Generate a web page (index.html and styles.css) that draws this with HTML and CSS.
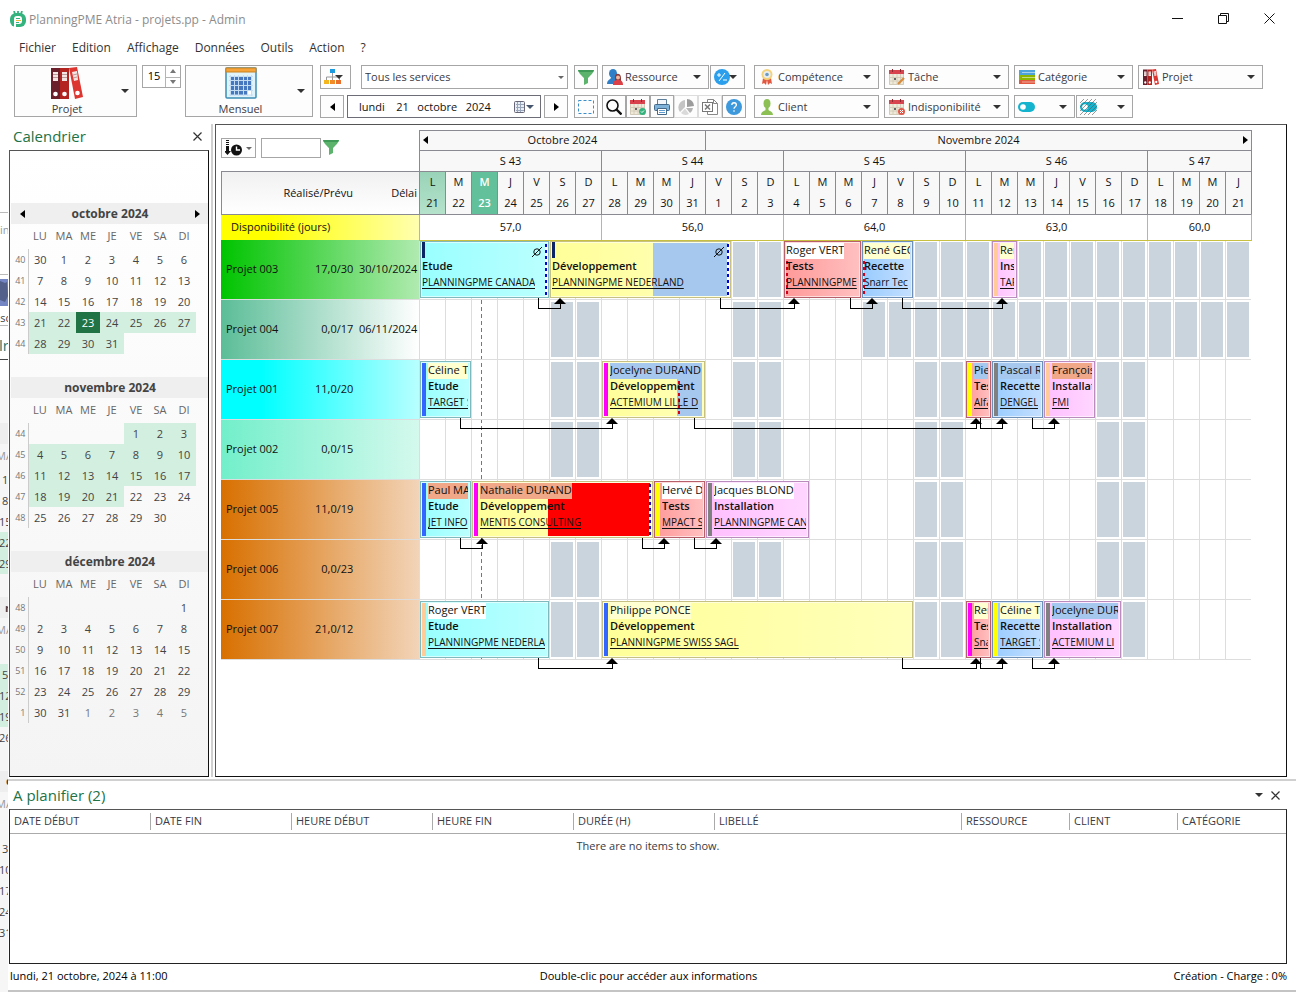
FILE: index.html
```html
<!DOCTYPE html>
<html lang="fr">
<head>
<meta charset="utf-8">
<meta name="viewport" content="width=device-width, initial-scale=1">
<title>PlanningPME Atria - projets.pp - Admin</title>
<link rel="stylesheet" href="styles.css">
</head>
<body>
<svg class="defs" width="0" height="0" aria-hidden="true">
  <symbol id="i-binders" viewBox="0 0 32 32">
    <path fill="#6b1f2a" d="M0 1h9v31H0z"/><path fill="#b32420" d="M9 1h9v31H9z"/><path fill="#dd3530" d="M18 1l8-1 6 30-8 2z"/>
    <path fill="#f4e4e2" d="M2 5h5v9H2zM11 5h5v9h-5zM21 5l5-1 1 9-4 1z"/>
    <path stroke="#b99" stroke-width="1" d="M2 7.500h5M2 10.500h5M11 7.500h5M11 10.500h5M22 8l4-1M22 11l4-1"/>
    <circle cx="4.500" cy="27" r="2.300" fill="#fff"/><circle cx="13.500" cy="27" r="2.300" fill="#fff"/><circle cx="26.500" cy="26" r="2.300" fill="#fff"/>
  </symbol>
  <symbol id="i-month" viewBox="0 0 32 32">
    <rect x="1" y="1" width="30" height="30" rx="1" fill="#dff3fa" stroke="#3c8db5" stroke-width="1.500"/>
    <rect x="1" y="1" width="30" height="4" fill="#f6a43a" stroke="#c98320"/>
    <path fill="#4678c0" d="M5 9h22v19H5z"/><path fill="#fff" d="M22 23h5v5h-5z"/>
    <path stroke="#c5ddf2" stroke-width="1" d="M5.500 8v21M9.500 8v21M13.500 8v21M18.500 8v21M22.500 8v21M26.500 8v21M4 9.500h24M4 13.500h24M4 18.500h24M4 23.500h24M4 28h24"/>
  </symbol>
  <symbol id="i-funnel" viewBox="0 0 16 16">
    <path fill="#5cb46c" d="M0 1h16c0 2-3 5-6 8v5l-4 2V9C3 6 0 3 0 1z"/><path fill="#3f9a58" d="M0 1h16l-1 2H1z"/>
  </symbol>
  <symbol id="i-people" viewBox="0 0 16 16">
    <ellipse cx="6" cy="4.500" rx="4" ry="4.500" fill="#2f7fc8"/><path fill="#2f7fc8" d="M0 15c0-5 4-4 4-7h5l2 7z"/>
    <path fill="#8a3a3a" d="M8 9c-1-5 6-6 6 0v4H8z"/><circle cx="11" cy="8.500" r="2" fill="#f0b9a0"/><path fill="#dc3f45" d="M6 16c0-4 2-5 5-5s5 1 5 5z"/>
  </symbol>
  <symbol id="i-task" viewBox="0 0 16 16">
    <path fill="#efe9da" stroke="#c9c0aa" stroke-width=".8" d="M.5 3h14v12.500H.5z"/><path fill="#d9434e" d="M0 1h15v4H0z"/>
    <path stroke="#8c2730" d="M3.500 0v3M11.500 0v3"/><path stroke="#cfc7b3" stroke-width=".8" d="M1 8.500h13M1 12h13M4 5v10M8 5v10M11.500 5v10"/><path fill="#666" d="M5 9h2v2H5z"/>
  </symbol>
</svg>

<svg class="behind" viewBox="0 0 8 992" aria-hidden="true">
  <rect y="380" width="8" height="612" fill="#f6f6f6"/>
  <path class="rule" d="M0 212.500h8M0 274.500h8M0 325.500h8"/><path class="rule-dark" d="M0 359.500h8"/>
  <rect y="279" width="8" height="27" fill="#7487c4"/><path d="M0 281l5 2 2-1 1 14-3 6-5-2z" fill="#53608a"/>
  <path class="band" d="M0 423h8v21H0zM0 597h8v21H0zM0 771h8v21H0z"/>
  <path class="range" d="M0 532h8v42H0zM0 664h8v63H0z"/>
  <text x="0" y="234" class="dim">in</text><text x="-5" y="322">ssc</text><text x="-1" y="351" class="teal">lr</text>
  <text x="-4" y="460" class="dim">MA</text><text x="2" y="484">1</text><text x="2" y="505">8</text><text x="-1" y="526">15</text><text x="-1" y="547">22</text><text x="-1" y="568">29</text>
  <text x="5" y="612" class="b">n</text><text x="-4" y="634" class="dim">MA</text><text x="2" y="679">5</text><text x="-1" y="700">12</text><text x="-1" y="721">19</text><text x="-1" y="742">26</text>
  <text x="6" y="785" class="b">d</text><text x="-4" y="808" class="dim">MA</text><text x="2" y="853">3</text><text x="-1" y="874">10</text><text x="-1" y="895">17</text><text x="-1" y="916">24</text><text x="-1" y="937">31</text>
</svg>

<div class="app">
  <header class="titlebar">
    <svg width="16" height="16" viewBox="0 0 16 16" aria-hidden="true"><rect x="0" y="2" width="16" height="14" rx="6" fill="#35b37e"/><path stroke="#35b37e" stroke-width="1.800" d="M4 0l1 3M8 0v3M12 0l-1 3"/><rect x="4" y="5" width="8" height="8" rx="3" fill="#fff"/><path fill="#fff" d="M4 9h2v7H4z"/><path stroke="#35b37e" d="M6 7.500h4M6 11.500h3"/><path stroke="#f0b840" d="M6 9.500h5"/></svg>
    <h1>PlanningPME Atria - projets.pp - Admin</h1>
    <div class="winbtns">
      <button type="button" aria-label="Réduire"><svg width="11" height="11"><path d="M0 5.500h11"/></svg></button>
      <button type="button" aria-label="Restaurer"><svg width="11" height="11"><path d="M.5 2.500h8v8h-8zM2.500 2.500v-2h8v8h-2"/></svg></button>
      <button type="button" aria-label="Fermer"><svg width="11" height="11"><path d="M.5.5l10 10M10.500.5l-10 10"/></svg></button>
    </div>
  </header>

  <nav class="menubar">
    <button type="button">Fichier</button><button type="button">Edition</button><button type="button">Affichage</button><button type="button">Données</button><button type="button">Outils</button><button type="button">Action</button><button type="button">?</button>
  </nav>

  <div class="toolbar">
    <button type="button" class="btn big projet"><span class="stack"><svg width="32" height="32"><use href="#i-binders"/></svg>Projet</span><i class="caret"></i></button>
    <div class="spinner">
      <input type="text" inputmode="numeric" value="15" aria-label="Échelle">
      <span class="steps"><button type="button" aria-label="Augmenter"><i class="tri-up"></i></button><button type="button" aria-label="Diminuer"><i class="tri-down"></i></button></span>
    </div>
    <button type="button" class="btn big mensuel"><span class="stack"><svg width="32" height="32"><use href="#i-month"/></svg>Mensuel</span><i class="caret"></i></button>

    <div class="rows filters">
      <div class="row top">
        <button type="button" class="btn org" aria-label="Organisation"><svg width="18" height="16" viewBox="0 0 18 16"><path stroke="#999" fill="none" d="M8.500 4v4M2.500 11V8h13v3M8.500 8v3"/><path fill="#1c9ae0" d="M6 0h5v4H6z"/><path fill="#f3b61f" d="M0 11h5v4H0z"/><path fill="#f28c28" d="M6 11h5v4H6z"/><path fill="#e8702a" d="M12 11h5v4h-5z"/></svg><i class="caret"></i></button>
        <span class="combo"><select aria-label="Services"><option>Tous les services</option></select><i class="caret mini"></i></span>
        <button type="button" class="btn sq" aria-label="Filtrer"><svg width="16" height="16"><use href="#i-funnel"/></svg></button>
        <button type="button" class="btn drop ressource"><svg width="16" height="16"><use href="#i-people"/></svg><span>Ressource</span><i class="caret"></i></button>
        <button type="button" class="btn calc" aria-label="Opérations"><svg width="16" height="16" viewBox="0 0 16 16"><circle cx="8" cy="8" r="8" fill="#2b9fec"/><path stroke="#fff" fill="none" d="M3 6h4M5 4v4M5 12l6-8M9 11h4"/></svg><i class="caret"></i></button>
      </div>
      <div class="row bottom">
        <button type="button" class="btn sq" aria-label="Précédent"><i class="tri-left"></i></button>
        <span class="date"><input type="text" value="lundi    21   octobre   2024" aria-label="Date"><button type="button" aria-label="Choisir une date"><svg width="20" height="14" viewBox="0 0 20 14"><rect x=".5" y="1.500" width="10" height="11" rx="1" fill="#e9eef5" stroke="#667"/><path stroke="#99a5b8" d="M2 4.500h8M2 7.500h8M2 10.500h8M3.500 2v10M6.500 2v10"/><path fill="#46566e" d="M12 5h8l-4 4z"/></svg></button></span>
        <button type="button" class="btn sq" aria-label="Suivant"><i class="tri-right"></i></button>
        <button type="button" class="btn sq gapped" aria-label="Sélection"><svg width="16" height="14" viewBox="0 0 16 14"><path fill="none" stroke="#3a8fc8" stroke-dasharray="3 2" d="M.5.5h15v13H.5z"/></svg></button>
        <span class="tools">
          <button type="button" class="btn sq" aria-label="Rechercher"><svg width="16" height="16" viewBox="0 0 16 16"><circle cx="6.500" cy="6.500" r="5.500" fill="none" stroke="#111" stroke-width="1.600"/><path stroke="#111" stroke-width="2.400" d="M10.500 10.500L15.500 15.500"/></svg></button>
          <button type="button" class="btn sq" aria-label="Planifier"><svg width="16" height="16" viewBox="0 0 16 16"><use href="#i-task" width="16" height="16"/><circle cx="12.500" cy="12.500" r="3.500" fill="#35b37e"/><path fill="none" stroke="#fff" d="M11 12.500l1 1 2-2"/></svg></button>
          <button type="button" class="btn sq" aria-label="Imprimer"><svg width="16" height="16" viewBox="0 0 16 16"><path fill="#f2f6fa" stroke="#5d7f9c" d="M3.500.5h9v5h-9z"/><rect x=".5" y="5.500" width="15" height="6" rx="1" fill="#7fb2d9" stroke="#44698a"/><path fill="#fff" stroke="#44698a" d="M3.500 9.500h9v6h-9z"/><path stroke="#5d9bd0" d="M5 11.500h6M5 13.500h6"/></svg></button>
          <button type="button" class="btn sq off" aria-label="Statistiques"><svg width="16" height="16" viewBox="0 0 16 16"><path fill="#c4c4c4" d="M7 8L2 13A7.500 7.500 0 0 1 7 1z"/><path fill="#9c9c9c" d="M9 0a7 7 0 0 1 7 7L9 8z"/><path fill="#b4b4b4" d="M8 9l7 0a7 7 0 0 1-3 5z"/><path fill="#dadada" d="M7 9.500l4 5.500a7 7 0 0 1-8-1z"/></svg></button>
          <button type="button" class="btn sq off" aria-label="Excel"><svg width="16" height="16" viewBox="0 0 16 16"><path fill="#fff" stroke="#888" d="M5.500.5h6l4 4v11h-10zM11.500.5v4h4"/><rect x=".5" y="3.500" width="10" height="9" fill="#fff" stroke="#777"/><path stroke="#777" stroke-width="1.500" d="M3 5.500l5 5M8 5.500l-5 5"/></svg></button>
          <button type="button" class="btn sq" aria-label="Aide"><svg width="16" height="16" viewBox="0 0 16 16"><circle cx="8" cy="8" r="8" fill="#3d98dc"/><path fill="none" stroke="#fff" stroke-width="1.300" d="M5.800 6c0-3 4.600-3 4.600 0C10.400 7.600 8 7.800 8 9.800M8 11.300v1.500"/></svg></button>
        </span>
      </div>
    </div>

    <div class="rows">
      <div class="row top">
        <button type="button" class="btn drop w-l"><svg width="16" height="16" viewBox="0 0 16 16"><path fill="#e2573f" d="M4 9l-1 6 2-1 2 2 1-5 1 5 2-2 2 1-1-6z"/><circle cx="8" cy="5.500" r="5.500" fill="#f3d27a"/><circle cx="8" cy="5.500" r="3.600" fill="#e8eef2"/><circle cx="8" cy="5.500" r="1.800" fill="#6d9cc0"/></svg><span>Compétence</span><i class="caret"></i></button>
        <button type="button" class="btn drop w-l"><svg width="16" height="16" viewBox="0 0 16 16"><use href="#i-task" width="16" height="16"/><path stroke="#d98a3a" stroke-width="2.200" d="M9 15l6-6"/></svg><span>Tâche</span><i class="caret"></i></button>
        <button type="button" class="btn drop w-m"><svg width="16" height="16" viewBox="0 0 16 16"><path fill="#4ea3dc" d="M0 1h16v5H0z"/><path fill="#8db600" d="M0 6h16v5H0z"/><path fill="#e2573f" d="M0 11h16v4H0z"/><path stroke="#fff" stroke-opacity=".5" d="M3 3.500h13M3 8.500h13M3 13h13"/></svg><span>Catégorie</span><i class="caret"></i></button>
        <button type="button" class="btn drop w-l"><svg width="16" height="16"><use href="#i-binders"/></svg><span>Projet</span><i class="caret"></i></button>
      </div>
      <div class="row bottom">
        <button type="button" class="btn drop w-l"><svg width="16" height="16" viewBox="0 0 16 16"><ellipse cx="8" cy="4.500" rx="3.500" ry="4.500" fill="#8cc055"/><path fill="#8cc055" d="M2 16c0-4 4-4 4.500-5V8h3v3c.5 1 4.500 1 4.500 5z"/></svg><span>Client</span><i class="caret"></i></button>
        <button type="button" class="btn drop w-l"><svg width="16" height="16" viewBox="0 0 16 16"><use href="#i-task" width="16" height="16"/><circle cx="12.500" cy="12.500" r="3.500" fill="#e05a4c"/><path stroke="#fff" d="M11 11l3 3M14 11l-3 3"/></svg><span>Indisponibilité</span><i class="caret"></i></button>
        <span class="pair w-m">
          <button type="button" class="btn drop state" aria-label="État"><svg width="17" height="16" viewBox="0 0 17 16"><rect y="3" width="17" height="10" rx="5" fill="#14b4cf"/><circle cx="5" cy="8" r="2.800" fill="#fff"/></svg><i class="caret"></i></button>
          <button type="button" class="btn drop hatch" aria-label="Fond"><svg width="17" height="16" viewBox="0 0 17 16"><rect y="3" width="17" height="10" rx="5" fill="#14b4cf"/><circle cx="5" cy="8" r="2.800" fill="#fff"/><path stroke="#555" stroke-width=".6" d="M0 4l4-4M0 8l8-8M0 12l12-12M0 16L16 0M4 16L17 3M8 16l9-9M12 16l5-5"/></svg><i class="caret"></i></button>
        </span>
      </div>
    </div>
  </div>

  <main class="workspace">
    <aside class="calendar">
      <div class="dock-title"><h2>Calendrier</h2><button type="button" class="x" aria-label="Fermer le calendrier"><svg width="9" height="9"><path d="M.5.5l8 8M8.500.5l-8 8"/></svg></button></div>
      <div class="months" id="months"></div>
    </aside>
    <div class="vsplit"></div>
    <section class="gantt">
      <div class="corner">
        <button type="button" class="btn sort" aria-label="Trier"><svg width="18" height="16" viewBox="0 0 18 16"><path fill="#111" d="M1 0h3v1H1zM1 2h3v1H1zM1 4h3v1H1zM1 6h3v5h2l-3.500 4L-1 11h2z"/><circle cx="11.500" cy="10" r="5.500" fill="#111"/><path fill="none" stroke="#fff" stroke-width="1.400" d="M11.500 6.500V10H15"/></svg><i class="caret mini"></i></button>
        <input type="text" class="quick" aria-label="Filtre rapide">
        <svg width="16" height="16" aria-hidden="true"><use href="#i-funnel"/></svg>
      </div>
      <div class="colhead"><span></span><span>Réalisé/Prévu</span><span>Délai</span></div>
      <div class="scale">
        <div class="cells monthrow" id="monthrow"></div>
        <div class="cells weekrow" id="weekrow"></div>
        <div class="cells dayrow" id="dayrow"></div>
      </div>
      <div class="availhead">Disponibilité (jours)</div>
      <div class="cells avail" id="avail"></div>
      <div class="projects" id="projects"></div>
      <div class="timeline" id="timeline"></div>
    </section>
  </main>

  <div class="hsplit"></div>
  <section class="todo">
    <div class="dock-title"><h2>A planifier (2)</h2><button type="button" class="x" aria-label="Options"><i class="caret"></i></button><button type="button" class="x" aria-label="Fermer la liste"><svg width="9" height="9"><path d="M.5.5l8 8M8.500.5l-8 8"/></svg></button></div>
    <div class="list">
      <table>
        <thead><tr><th class="c-date">DATE DÉBUT</th><th class="c-date">DATE FIN</th><th class="c-date">HEURE DÉBUT</th><th class="c-date">HEURE FIN</th><th class="c-date">DURÉE (H)</th><th>LIBELLÉ</th><th class="c-end">RESSOURCE</th><th class="c-end">CLIENT</th><th class="c-end">CATÉGORIE</th></tr></thead>
        <tbody><tr><td colspan="9">There are no items to show.</td></tr></tbody>
      </table>
    </div>
  </section>
  <footer class="status"><span>lundi, 21 octobre, 2024 à 11:00</span><span>Double-clic pour accéder aux informations</span><span>Création - Charge : 0%</span></footer>
</div>
<script src="app.js"></script>
</body>
</html>
```
FILE: styles.css
```css
* { box-sizing: border-box; }
body {
  margin: 0;
  display: grid;
  grid-template-columns: 8px minmax(0, 1fr);
  min-height: 100vh;
  background: #fff;
  color: #111;
  font: 11px/16px "Open Sans", "Noto Sans", sans-serif;
}
button, input, select { font: inherit; color: inherit; margin: 0; padding: 0; border: 0; background: none; }
h1, h2 { margin: 0; font-weight: 400; }
svg { display: block; flex: none; }
.defs { position: absolute; }

/* window lying behind the left edge */
.behind { width: 8px; height: 992px; overflow: hidden; font-size: 11px; fill: #444; }
.behind .dim { fill: #999; }
.behind .b { font-weight: 700; }
.behind .teal { fill: #217a72; font-size: 15px; }
.behind .rule { stroke: #bbb; }
.behind .rule-dark { stroke: #444; }
.behind .band { fill: #eee; }
.behind .range { fill: #d3efdf; }

.app { display: flex; flex-direction: column; min-height: 100vh; border-bottom: 2px solid #c4c4c4; }

.titlebar { display: flex; align-items: center; height: 37px; padding: 0 4px 0 2px; gap: 3px; color: #8c8c8c; }
.titlebar h1 { font-size: 12px; flex: 1; padding-top: 2px; }
.winbtns { display: flex; }
.winbtns button { width: 46px; height: 30px; display: grid; place-items: center; }
.winbtns path { stroke: #111; fill: none; }

.menubar { display: flex; align-items: center; gap: 16px; height: 21px; padding-left: 11px; font-size: 12px; color: #333; }

.caret { width: 0; height: 0; border: 4px solid transparent; border-top-color: #333; border-bottom: 0; flex: none; }
.caret.mini { border-width: 3px; border-bottom: 0; border-top-color: #666; }
.tri-up { border: 3px solid transparent; border-bottom: 4px solid #777; border-top: 0; }
.tri-down { border: 3px solid transparent; border-top: 4px solid #777; border-bottom: 0; }
.tri-left { border: 4px solid transparent; border-right: 5px solid #000; border-left: 0; }
.tri-right { border: 4px solid transparent; border-left: 5px solid #000; border-right: 0; }

.toolbar { display: flex; height: 66px; padding: 7px 0 6px 6px; color: #3a3a44; }
.btn { display: flex; align-items: center; border: 1px solid #a6a6a6; background: #fdfdfd; }
.big { height: 52px; justify-content: flex-end; padding-right: 7px; }
.stack { display: flex; flex-direction: column; align-items: center; flex: 1; gap: 2px; padding: 2px 2px 0 0; }
.projet { width: 123px; margin-right: 5px; }
.mensuel { width: 128px; margin-right: 7px; }
.spinner { display: flex; width: 39px; height: 23px; margin-right: 4px; border: 1px solid #a6a6a6; }
.spinner input { width: 22px; padding-bottom: 2px; text-align: center; color: #000; }
.steps { flex: 1; display: grid; grid-template-rows: 1fr 1fr; border-left: 1px solid #b4b4b4; }
.steps button { display: grid; place-items: center; }
.steps button + button { border-top: 1px solid #b4b4b4; }

.rows { display: flex; flex-direction: column; gap: 6px; margin-right: 8px; }
.row { display: flex; }
.row.top { height: 24px; }
.row.bottom { height: 23px; }
.sq { width: 24px; justify-content: center; }
.off { border-color: #ddd; }
.tools { display: flex; }
.org { width: 31px; margin-right: 10px; padding-left: 3px; }
.org .caret { margin-left: -7px; }
.calc { width: 35px; padding-left: 3px; margin-left: 1px; }
.calc .caret { margin-left: -1px; }
.combo { display: flex; align-items: center; width: 207px; margin-right: 6px; padding-right: 3px; border: 1px solid #a6a6a6; }
.combo select { appearance: none; flex: 1; height: 100%; padding-left: 3px; }
.drop { padding: 0 7px 0 4px; gap: 3px; }
.drop span { flex: 1; text-align: left; white-space: nowrap; }
.ressource { width: 107px; margin-left: 4px; gap: 2px; }
.date { display: flex; align-items: center; width: 194px; margin: 0 3px; padding-right: 6px; border: 1px solid #6d6d78; color: #111; }
.date input { flex: 1; min-width: 0; padding-left: 11px; white-space: pre; }
.gapped { margin: 0 4px 0 6px; }
.rows:last-child .row { gap: 5px; }
.w-l { width: 125px; }
.w-m { width: 119px; }
.pair { display: flex; gap: 1px; }
.pair .drop { justify-content: space-between; padding-left: 3px; }
.state { width: 61px; }
.hatch { width: 57px; }

.workspace { flex: 1; display: flex; padding: 0 9px 2px 1px; }
.dock-title { display: flex; align-items: center; height: 26px; padding: 0 7px 2px 4px; gap: 8px; }
.dock-title h2 { flex: 1; font-size: 15px; line-height: 20px; color: #217346; }
.x { display: grid; place-items: center; height: 16px; }
.x path { stroke: #333; stroke-width: 1.2; }

.calendar { width: 200px; display: flex; flex-direction: column; }
.months { flex: 1; border: 1px solid #111; border-color: #555 #111 #111 #555; background: linear-gradient(#fff, #f4f4f4); padding: 52px 0 0 1px; }
.month { margin-bottom: 23px; color: #444; }
.month h3 { margin: 0; height: 21px; background: #efefef; font-size: 12px; line-height: 21px; display: flex; align-items: center; padding: 0 8px 0 9px; }
.month h3 span { flex: 1; text-align: center; }
.month h3 button { display: flex; }
.month table { border-collapse: collapse; table-layout: fixed; width: 185px; }
.month th, .month td { padding: 0; height: 21px; text-align: center; font-weight: 400; }
.month thead th { height: 25px; padding-bottom: 2px; color: #666; }
.month .wk { width: 17px; text-align: right; padding-right: 2px; font-size: 9px; color: #777; }
.month tbody .wk { border-right: 1px solid #ccc; }
.month .in { background: #d3efdf; }
.month .today { background: #217346; color: #fff; }
.month .out { color: #777; }

.vsplit { width: 2px; margin: 0 2px; background: #d0d0d0; }
.gantt {
  flex: 1; min-width: 0;
  display: grid;
  grid-template-columns: 198px minmax(0, 1fr);
  grid-template-rows: 41px 43px 26px 420px;
  align-content: start;
  padding: 5px 34px 20px 5px;
  border: 1px solid #555; border-right-color: #111; border-bottom-color: #111;
}
.corner { display: flex; align-items: flex-start; padding-top: 8px; gap: 5px; }
.sort { width: 35px; height: 20px; padding-left: 3px; gap: 3px; }
.quick { width: 60px; height: 20px; border: 1px solid #a6a6a6; }
.corner > svg { margin: 1px 0 0 -3px; }
.colhead, .project { display: grid; grid-template-columns: 1fr 75px 64px; align-items: center; text-align: right; padding: 0 2px 0 5px; white-space: nowrap; }
.colhead { grid-column: 1; grid-row: 2; border: 1px solid #8a8a92; border-right: 0; border-bottom: 0; background: linear-gradient(#f1f1f1, #fff); }
.scale { grid-column: 2; grid-row: 1 / 3; display: grid; grid-template-rows: 20px 21px 43px; border-right: 1px solid #8a8a92; }
.cells { display: grid; grid-template-columns: repeat(32, minmax(0, 1fr)); }
.scale .cells > * { border-left: 1px solid #8a8a92; border-top: 1px solid #8a8a92; background: #f8f8f8; text-align: center; }
.monthrow > * { line-height: 18px; display: flex; align-items: flex-start; }
.monthrow span { flex: 1; }
.monthrow button { display: flex; width: 5px; height: 18px; align-items: center; margin: 0 -8px 0 3px; }
.monthrow span + button { margin: 0 3px 0 -8px; }
.weekrow > * { line-height: 20px; }
.dayrow > * { display: grid; grid-template-rows: 21px 21px; line-height: 20px; }
.scale .dayrow .first { background: linear-gradient(#98d3b8, #b5e2cb); }
.scale .dayrow .now { background: #62c09b; color: #fff; font-weight: 600; }
.availhead { padding-left: 10px; line-height: 24px; background: linear-gradient(90deg, #ff0, #ff0 25%, #ffffb0); border-top: 1px solid #8a8a92; }
.avail { position: relative; z-index: 1; border-top: 1px solid #8a8a92; border-right: 1px solid #c8c040; box-shadow: 0 1px 0 #c8c040; }
.avail > * { border-left: 1px solid #c8c040; text-align: center; line-height: 24px; }

.project { height: 60px; padding-bottom: 2px; border-bottom: 1px solid #ddd; }
.project span:first-child { text-align: left; }
.p-green { background: linear-gradient(90deg, #00c400, #b0eab0); }
.p-teal { background: linear-gradient(90deg, #5bbd98, #fff); }
.p-cyan { background: linear-gradient(90deg, #0ff, #0ff 20%, #b8ffff); }
.p-mint { background: linear-gradient(90deg, #72efca, #d4f9ed); }
.p-orange { background: linear-gradient(90deg, #d87000, #f2d4b8); }

.timeline { position: relative; margin-right: 1px; }
.lane { position: relative; height: 60px; border-bottom: 1px solid #ddd; }
.lane > .cells { height: 59px; }
.slot { grid-row: 1; border-left: 1px solid #ddd; }
.slot.closed::after { content: ""; display: block; height: 55px; margin: 2px 2px 0 1px; background: #cad4dd; }
.nowline { position: absolute; top: 60px; bottom: 1px; width: 1px; background: repeating-linear-gradient(#2ca06c 0 4px, transparent 4px 7px); }

.task { position: relative; grid-row: 1; height: 57px; margin: 1px 0 0 1px; border: 1px solid; overflow: hidden; box-shadow: inset 0 0 0 1px #fff9; padding: 1px 2px 0 1px; white-space: nowrap; }
.task.bar { padding-left: 7px; }
.task span { position: relative; display: block; height: 16px; width: max-content; max-width: 100%; overflow: hidden; line-height: 14px; }
.task .title { font-weight: 600; }
.task .client { font-size: 10px; text-decoration: underline; text-underline-offset: 2px; }
.etude { background: linear-gradient(90deg, #9ff, #bff); border-color: #7fb9bd; }
.dev { background: linear-gradient(90deg, #ff9, #ffb); border-color: #c6c183; }
.tests { background: linear-gradient(90deg, #f99, #ffc0c0); border-color: #b5606a; }
.recette { background: linear-gradient(90deg, #9cf, #c4dfff); border-color: #6f90b6; }
.install { background: linear-gradient(90deg, #ffbfff, #ffd6ff); border-color: #b98cbd; }
.stripe { position: absolute; left: 1px; top: 1px; bottom: 1px; width: 4px; }
.stripe.short { top: 0; bottom: auto; width: 3px; height: 16px; }
.s-navy { background: #0a2466; } .s-blue { background: #36f; } .s-pink { background: #f0f; }
.s-yellow { background: #ff0; } .s-grey { background: #808080; } .s-peach { background: #ffcc99; }
.n-cream { background: #ffffcf; } .n-blue { background: #a6c8ee; } .n-salmon { background: #f0a888; } .n-white { background: #fff; }
.load { position: absolute; top: 1px; bottom: 1px; right: 2px; background: #a6c8ee; }
.load.over { background: red; }
.dots { position: absolute; top: 2px; bottom: 1px; right: 1px; width: 2px; background: repeating-linear-gradient(#0000d8 0 3px, #fff 3px 6px); }
.reddots { position: absolute; top: 19px; bottom: 1px; width: 2px; background: repeating-linear-gradient(#d00018 0 3px, transparent 3px 6px); }
.task svg { position: absolute; top: 5px; right: 6px; }
.link { position: absolute; top: 58px; height: 11px; border: solid #000; border-width: 0 0 1px 1px; z-index: 2; }
.link::after { content: ""; position: absolute; right: -5px; top: 0; border: 6px solid transparent; border-top: 0; border-bottom: 6px solid #000; }
.link::before { content: ""; position: absolute; right: 0; bottom: 0; width: 1px; height: 5px; background: #000; }

.hsplit { height: 2px; margin-bottom: 2px; background: #d0d0d0; }
.todo { padding: 0 9px 0 1px; }
.list { height: 155px; border: 1px solid #222; border-top-color: #555; }
.list table { width: 100%; border-collapse: collapse; table-layout: fixed; color: #3a3a44; }
.list th { height: 23px; padding: 0 0 0 4px; font-weight: 400; text-align: left; border-bottom: 1px solid #aaa; background: linear-gradient(#aaa, #aaa) right 3px / 1px 17px no-repeat; }
.list th:last-child { background: none; }
.c-date { width: 141px; }
.c-end { width: 108px; }
.list td { padding: 4px 0; text-align: center; }
.status { display: grid; grid-template-columns: 1fr auto 1fr; align-items: center; height: 26px; padding: 0 9px 2px 2px; color: #000; }
.status span:last-child { text-align: right; }
```
FILE: app.js
```js
const DAYS = 32;
const el = (tag, cls, text) => {
  const node = document.createElement(tag);
  if (cls) node.className = cls;
  if (text !== undefined) node.textContent = text;
  return node;
};
const byId = (id) => document.getElementById(id);

/* ---- month calendars ---- */
const MONTHS = [
  { name: "octobre 2024", lead: [30], days: 31, from: 21, to: 31, today: 23, week: 40 },
  { name: "novembre 2024", lead: ["", "", "", ""], days: 30, from: 1, to: 21, week: 44 },
  { name: "décembre 2024", lead: ["", "", "", "", "", ""], days: 31, tail: 5, week: 48 }
];
MONTHS.forEach((m, index) => {
  const box = el("div", "month");
  const head = el("h3");
  if (index === 0) {
    const prev = el("button");
    prev.type = "button";
    prev.ariaLabel = "Mois précédent";
    prev.append(el("i", "tri-left"));
    const next = el("button");
    next.type = "button";
    next.ariaLabel = "Mois suivant";
    next.append(el("i", "tri-right"));
    head.append(prev, el("span", "", m.name), next);
  } else {
    head.append(el("span", "", m.name));
  }
  const table = el("table");
  const thead = el("thead");
  const tr = el("tr");
  tr.append(el("th", "wk"));
  ["LU", "MA", "ME", "JE", "VE", "SA", "DI"].forEach((d) => tr.append(el("th", "", d)));
  thead.append(tr);
  const tbody = el("tbody");
  const cells = m.lead.map((d) => [d, ""]);
  for (let d = 1; d <= m.days; d++) {
    cells.push([d, d === m.today ? "today" : d >= m.from && d <= m.to ? "in" : ""]);
  }
  for (let d = 1; d <= (m.tail || 0); d++) cells.push([d, "out"]);
  for (let i = 0; i < cells.length; i += 7) {
    const row = el("tr");
    const week = m.week + i / 7;
    row.append(el("th", "wk", week > 52 ? week - 52 : week));
    cells.slice(i, i + 7).forEach(([d, cls]) => row.append(el("td", cls, d)));
    tbody.append(row);
  }
  table.append(thead, tbody);
  box.append(head, table);
  byId("months").append(box);
});

/* ---- time scale ---- */
const span = (node, from, to) => {
  node.style.gridColumn = `${from + 1} / ${to + 1}`;
  return node;
};
[["Octobre 2024", 0, 11, "left"], ["Novembre 2024", 11, 32, "right"]].forEach(([name, a, b, side]) => {
  const cell = span(el("div"), a, b);
  const button = el("button");
  button.type = "button";
  button.ariaLabel = side === "left" ? "Période précédente" : "Période suivante";
  button.append(el("i", "tri-" + side));
  if (side === "left") cell.append(button, el("span", "", name));
  else cell.append(el("span", "", name), button);
  byId("monthrow").append(cell);
});
[["S 43", "57,0", 0, 7], ["S 44", "56,0", 7, 14], ["S 45", "64,0", 14, 21], ["S 46", "63,0", 21, 28], ["S 47", "60,0", 28, 32]].forEach(([w, v, a, b]) => {
  byId("weekrow").append(span(el("div", "", w), a, b));
  byId("avail").append(span(el("div", "", v), a, b));
});
for (let i = 0; i < DAYS; i++) {
  const cell = el("div", i === 0 ? "first" : i === 2 ? "now" : "");
  cell.append(el("span", "", "LMMJVSD"[i % 7]), el("span", "", i < 11 ? 21 + i : i - 10));
  byId("dayrow").append(cell);
}

/* ---- projects: task = [kind, from, to, stripe, person, person colour, client, extras] ---- */
const TITLES = { etude: "Etude", dev: "Développement", tests: "Tests", recette: "Recette", install: "Installation" };
const PROJECTS = [
  { name: "Projet 003", done: "17,0/30", due: "30/10/2024", tint: "green", closedFrom: 17, tasks: [
    ["etude", 0, 5, "navy", "", "", "PLANNINGPME CANADA", { dots: 1, mark: 1 }],
    ["dev", 5, 12, "navy", "", "", "PLANNINGPME NEDERLAND", { dots: 1, mark: 1, load: 42 }],
    ["tests", 14, 17, "", "Roger VERT", "white", "PLANNINGPME", { red: 1 }],
    ["recette", 17, 19, "", "René GEC", "cream", "Snarr Tec", { red: 1 }],
    ["install", 22, 23, "peach", "Ren", "cream", "TAR", {}]],
    links: [[5, 5], [12, 14], [17, 17], [19, 22]] },
  { name: "Projet 004", done: "0,0/17", due: "06/11/2024", tint: "teal", closedFrom: 17, tasks: [], links: [] },
  { name: "Projet 001", done: "11,0/20", due: "", tint: "cyan", tasks: [
    ["etude", 0, 2, "blue", "Céline T", "cream", "TARGET S", {}],
    ["dev", 7, 11, "pink", "Jocelyne DURAND", "blue", "ACTEMIUM LILLE D", { load: 25, red: 74 }],
    ["tests", 21, 22, "yellow", "Pie", "blue", "Alfa", {}],
    ["recette", 22, 24, "grey", "Pascal R", "blue", "DENGEL", {}],
    ["install", 24, 26, "peach", "François", "salmon", "FMI", {}]],
    links: [[2, 7], [11, 21], [22, 22], [24, 24]] },
  { name: "Projet 002", done: "0,0/15", due: "", tint: "mint", tasks: [], links: [] },
  { name: "Projet 005", done: "11,0/19", due: "", tint: "orange", tasks: [
    ["etude", 0, 2, "blue", "Paul MAR", "salmon", "JET INFO", {}],
    ["dev", 2, 9, "pink", "Nathalie DURAND", "salmon", "MENTIS CONSULTING", { dots: 1, load: 57, over: 1 }],
    ["tests", 9, 11, "yellow", "Hervé D", "white", "MPACT S", {}],
    ["install", 11, 15, "grey", "Jacques BLOND", "white", "PLANNINGPME CAN", {}]],
    links: [[2, 2], [9, 9], [11, 11]] },
  { name: "Projet 006", done: "0,0/23", due: "", tint: "orange", tasks: [], links: [] },
  { name: "Projet 007", done: "21,0/12", due: "", tint: "orange", tasks: [
    ["etude", 0, 5, "peach", "Roger VERT", "white", "PLANNINGPME NEDERLA", {}],
    ["dev", 7, 19, "blue", "Philippe PONCE", "cream", "PLANNINGPME SWISS SAGL", {}],
    ["tests", 21, 22, "pink", "Ren", "cream", "Sna", {}],
    ["recette", 22, 24, "yellow", "Céline T", "cream", "TARGET S", {}],
    ["install", 24, 27, "grey", "Jocelyne DUR", "blue", "ACTEMIUM LI", {}]],
    links: [[5, 7], [19, 21], [22, 22], [24, 24]] }
];
const MARK = '<svg width="10" height="10" viewBox="0 0 10 10"><circle cx="5" cy="5" r="3.200" fill="none" stroke="#111"/><path stroke="#111" d="M0 10L10 0"/></svg>';
const percent = (days) => `${(days / DAYS) * 100}%`;

const nowline = el("div", "nowline");
nowline.style.left = percent(2.385);
byId("timeline").append(nowline);

PROJECTS.forEach((p) => {
  const head = el("div", "project p-" + p.tint);
  head.append(el("span", "", p.name), el("span", "", p.done), el("span", "", p.due));
  byId("projects").append(head);

  const lane = el("div", "lane");
  const cells = el("div", "cells");
  for (let i = 0; i < DAYS; i++) {
    const closed = (i < 28 && i % 7 > 4) || i >= p.closedFrom;
    cells.append(span(el("div", closed ? "slot closed" : "slot"), i, i + 1));
  }
  p.tasks.forEach(([kind, a, b, stripe, person, tone, client, x]) => {
    const task = span(el("div", `task ${kind}${stripe && stripe !== "navy" ? " bar" : ""}`), a, b);
    if (x.load) {
      const load = el("div", x.over ? "load over" : "load");
      load.style.width = `${x.load}%`;
      task.append(load);
    }
    if (stripe) task.append(el("div", `stripe s-${stripe}${stripe === "navy" ? " short" : ""}`));
    if (x.dots) task.append(el("div", "dots"));
    if (x.red) {
      const red = el("div", "reddots");
      red.style.left = `${x.red}%`;
      task.append(red);
    }
    task.append(el("span", tone ? "n-" + tone : "", person), el("span", "title", TITLES[kind]), el("span", "client", client));
    if (x.mark) task.insertAdjacentHTML("beforeend", MARK);
    cells.append(task);
  });
  lane.append(cells);
  p.links.forEach(([from, to]) => {
    const link = el("div", "link");
    link.style.left = `calc(${percent(from)} - 11px)`;
    link.style.width = `calc(${percent(to - from)} + 23px)`;
    lane.append(link);
  });
  byId("timeline").append(lane);
});
```
